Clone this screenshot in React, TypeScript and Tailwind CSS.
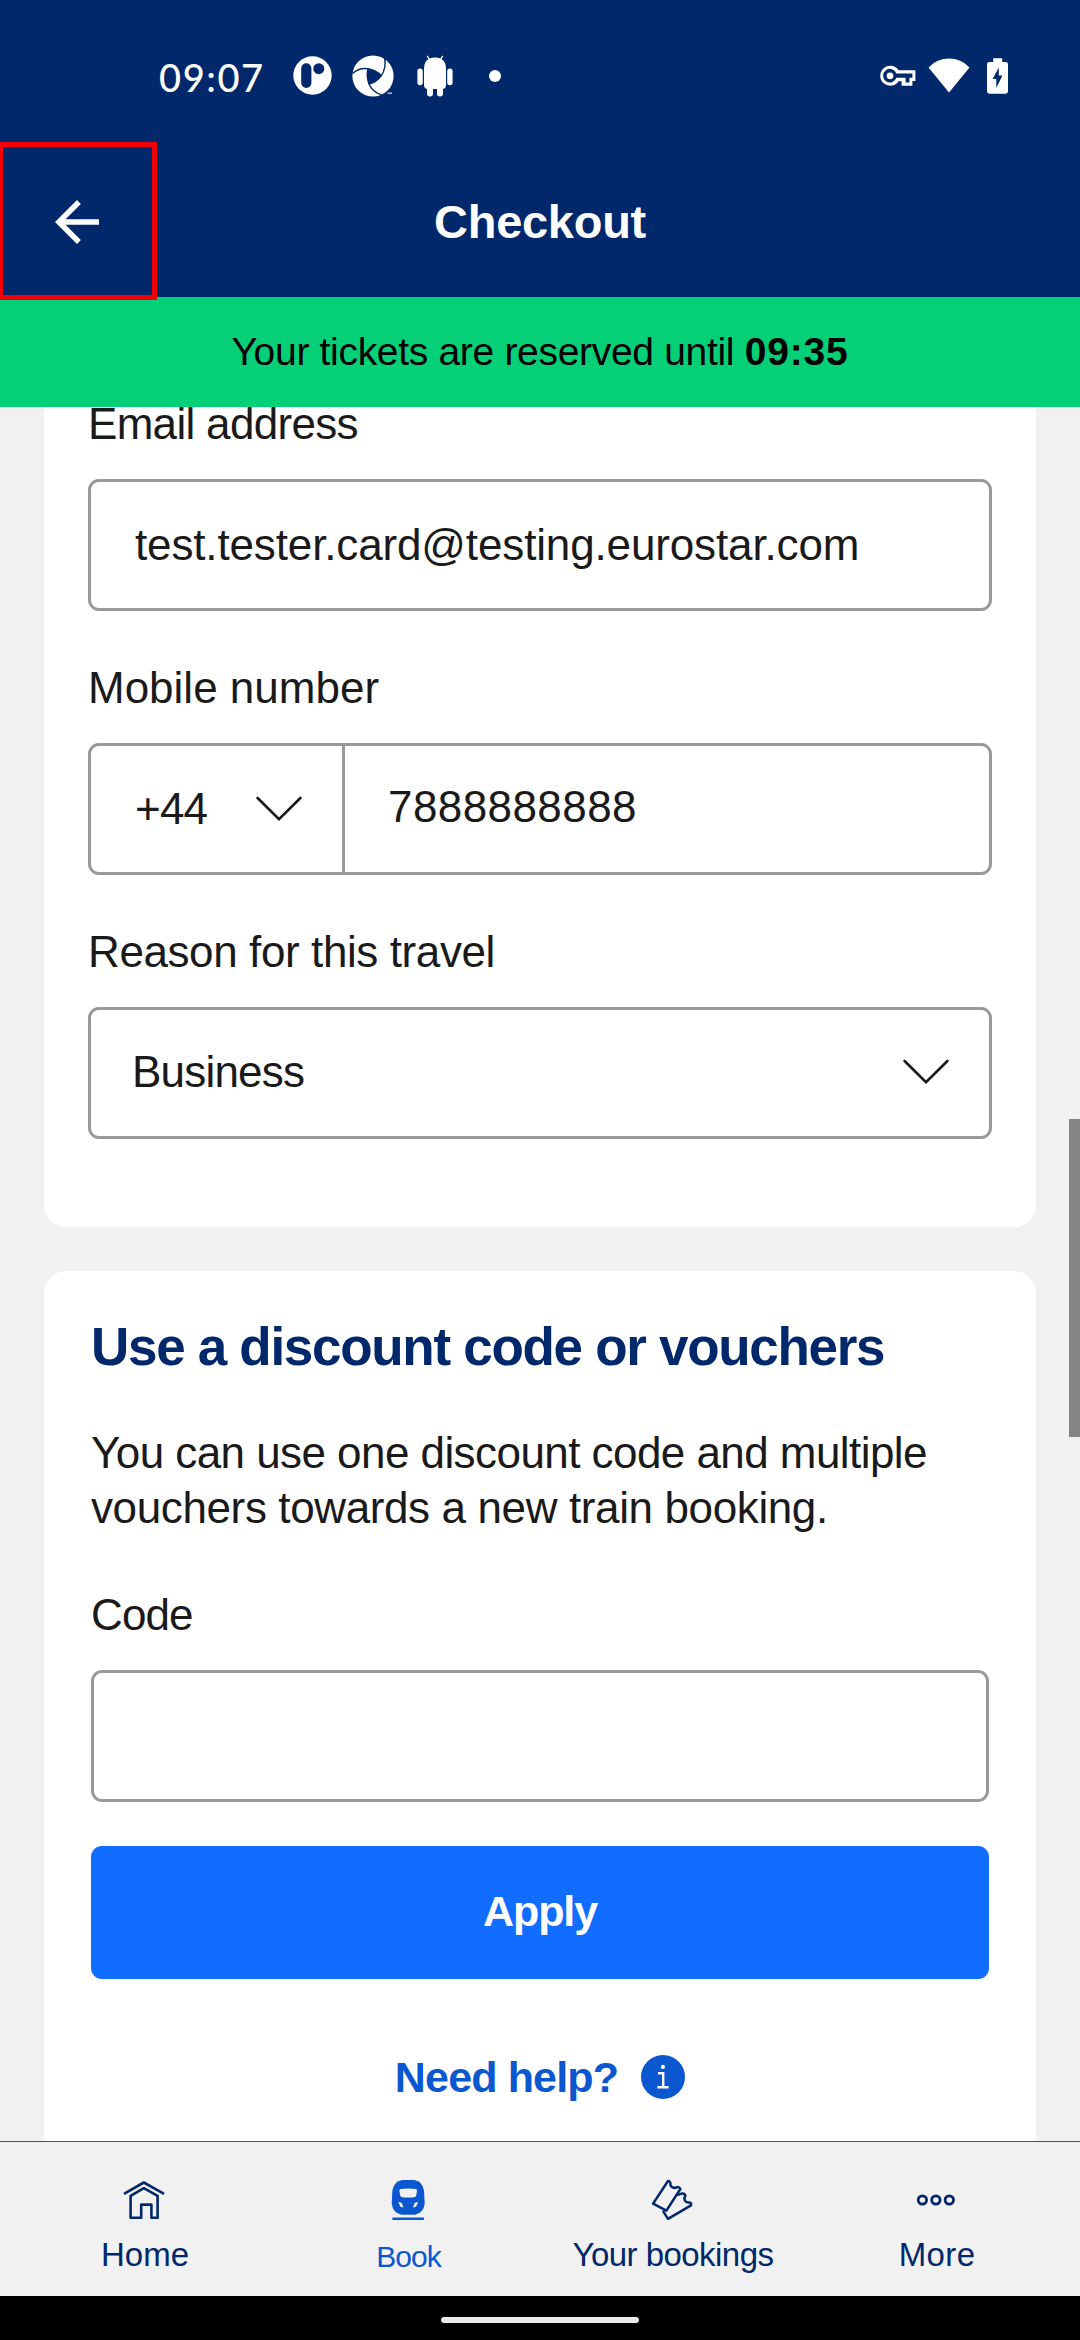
import type { ReactNode } from "react";

function CircleLogoIcon() {
  return (
    <svg width="39" height="39" viewBox="0 0 39 39" fill="#fff">
      <circle cx="19.5" cy="19.5" r="19.2" />
      <rect x="8.2" y="7.3" width="10.2" height="24.6" rx="5.1" fill="#00286a" />
      <circle cx="25.8" cy="12.7" r="5.5" fill="#00286a" />
    </svg>
  );
}

function ShutterIcon() {
  return (
    <svg width="42" height="42" viewBox="0 0 42 42" fill="none">
      <circle cx="21" cy="21" r="20.6" fill="#fff" />
      <path d="M16 13.7Q24 15 29.3 20.7Q24.5 27.5 17 29Q14 21 16 13.7Z" fill="#00286a" />
      <g stroke="#00286a" strokeWidth="1.4">
        <path d="M0.5 18.5Q7 12.5 16 13.7Q24 15 29.3 20.7" />
        <path d="M32.6 3Q34.5 13 29.3 20.7Q24.5 27.5 17 29" />
        <path d="M29.5 39.6Q20.5 37.5 17 29Q14 21 16 13.7" />
      </g>
      <path d="M31 40.5l6-4.2h5V42H31z" fill="#00286a" />
      <path d="M35.5 38.2h4.5" stroke="#c8d2e6" strokeWidth="1.3" />
    </svg>
  );
}

function AndroidIcon() {
  return (
    <svg width="36" height="42" viewBox="0 0 36 42" fill="#fff">
      <path d="M10.2 0.8l2.6 4M25.8 0.8l-2.6 4" stroke="#fff" strokeWidth="1.2" />
      <path d="M7 14Q7 2.4 18 2.4T29 14V30q0 3.5-3 4H10q-3-.5-3-4z" />
      <rect x="0.4" y="13.6" width="5.4" height="16.6" rx="2.6" />
      <rect x="30.2" y="13.6" width="5.4" height="16.6" rx="2.6" />
      <rect x="10" y="30" width="6" height="11.4" rx="2.4" />
      <rect x="20" y="30" width="6" height="11.4" rx="2.4" />
    </svg>
  );
}

function KeyIcon() {
  return (
    <svg width="36" height="22" viewBox="0 0 36 22">
      <path
        d="M18.6 5.2H35.4V16H32.4V20.8H21.6V16.2H18.6A10 10 0 1 1 18.6 5.2Z"
        fill="#fff"
      />
      <path
        d="M16.4 8.6H32.4V12.8H29.4V17.4H25.6V12.8H16.4A6.8 6.8 0 1 1 16.4 8.6Z"
        fill="#00286a"
      />
      <circle cx="10" cy="10.8" r="3.4" fill="#fff" />
    </svg>
  );
}

function WifiIcon() {
  return (
    <svg width="42" height="35" viewBox="0 0 42 35" fill="#fff">
      <path d="M21 34.6L0.5 9.4Q9 0.6 21 0.6T41.5 9.4Z" />
    </svg>
  );
}

function BatteryIcon() {
  return (
    <svg width="21" height="36" viewBox="0 0 21 36">
      <path
        d="M6.2 0.3h9v3.6h3.4Q21 3.9 21 6.3V33.3Q21 35.7 18.6 35.7H2.4Q0 35.7 0 33.3V6.3Q0 3.9 2.4 3.9H6.2Z"
        fill="#fff"
      />
      <path d="M11.8 9.6V17.6H15.4L9.3 30V21H5.6Z" fill="#00286a" />
    </svg>
  );
}

function BackIcon() {
  return (
    <svg width="66" height="66" viewBox="0 0 24 24" fill="#fff">
      <path d="M20 11H7.83l5.59-5.59L12 4l-8 8 8 8 1.41-1.41L7.83 13H20v-2z" />
    </svg>
  );
}

function Chevron() {
  return (
    <svg width="46" height="26" viewBox="0 0 46 26" fill="none" stroke="#1a1a1a" strokeWidth="2.6">
      <path d="M1.6 2L23 23.2L44.4 2" strokeLinecap="round" />
    </svg>
  );
}

function InfoIcon() {
  return (
    <svg width="44" height="44" viewBox="0 0 44 44">
      <circle cx="22" cy="22" r="22" fill="#0b57d0" />
      <circle cx="21.9" cy="11.9" r="2.1" fill="#fff" />
      <path d="M17 18.3H22.2V31.6M16.4 32.2H27.6" fill="none" stroke="#fff" strokeWidth="2.4" />
    </svg>
  );
}

function HomeIcon() {
  return (
    <svg width="44" height="44" viewBox="0 0 44 44" fill="none" stroke="#00286a" strokeWidth="2.6" strokeLinejoin="round" strokeLinecap="round">
      <path d="M2.9 15.4L21.8 4.5L41.2 15.4" />
      <path d="M8.6 17.8L21.8 10.2L35.6 17.8V39.8H29.4V26.6H19.2V39.8H8.6Z" />
    </svg>
  );
}

function TrainIcon() {
  return (
    <svg width="44" height="44" viewBox="0 0 44 44" fill="#0b57d0">
      <path d="M16 2H28.4Q36.6 3.4 38 12.5L38.7 25.5Q37.6 35 29 36.8H15.4Q6.8 35 5.7 25.5L6.4 12.5Q7.8 3.4 16 2Z" />
      <path d="M14.6 11Q22.2 9.8 29.8 11Q31.2 11.4 31 13L30.2 17.4Q29.8 19 28.2 19.2Q22.2 20 16.2 19.2Q14.6 19 14.2 17.4L13.4 13Q13.2 11.4 14.6 11Z" fill="#f1f1f1" />
      <path d="M12.2 24L15.6 24.7L17.5 29.5L14.4 28.8ZM32.2 24L28.8 24.7L26.9 29.5L30 28.8Z" fill="#f1f1f1" />
      <path d="M7.4 40.7H37" stroke="#0b57d0" strokeWidth="2.4" strokeLinecap="round" />
    </svg>
  );
}

function TicketsIcon() {
  return (
    <svg width="44" height="44" viewBox="0 0 44 44" fill="none" stroke="#00286a" strokeWidth="2.5" strokeLinejoin="round" strokeLinecap="round">
      <path d="M18 3L3.1 25.6L16.4 32.6L30.4 11Q29 8.6 27 9.2Q24.2 10.8 21.6 8.8Q20 7.4 20.4 5Q19.8 3 18 3Z" />
      <path d="M13.4 33.6L18 40.8L41 27.4Q41.6 25.2 39.6 24.4Q36.4 25.2 34.8 22.4Q33.8 20 35.4 17.8Q34.6 15 31.6 15.6L28.4 16.6" />
    </svg>
  );
}

function MoreIcon() {
  return (
    <svg width="44" height="44" viewBox="0 0 44 44" fill="none" stroke="#00286a" strokeWidth="2.8">
      <circle cx="8.4" cy="22" r="4.2" />
      <circle cx="21.9" cy="22" r="4.2" />
      <circle cx="35.3" cy="22" r="4.2" />
    </svg>
  );
}

function Label({ className, children }: { className: string; children: ReactNode }) {
  return <div className={`h-[34px] text-[44px] leading-[34px] whitespace-nowrap ${className}`}>{children}</div>;
}

function Tab({ icon, className, children }: { icon: ReactNode; className: string; children: ReactNode }) {
  return (
    <div className="flex flex-col items-center pt-[36px]">
      {icon}
      <div className={`h-[40px] leading-[40px] whitespace-nowrap ${className}`}>{children}</div>
    </div>
  );
}

export default function App() {
  return (
    <div className="flex h-[2340px] w-[1080px] flex-col overflow-hidden bg-[#f1f1f1] font-['Liberation_Sans',Arial,sans-serif] text-[#1a1a1a]">
      <header className="flex h-[297px] shrink-0 flex-col bg-[#00286a] text-white">
        <div className="flex h-[142px] shrink-0 items-center pt-[9px] pr-[72px] pl-[159px]">
          <span className="w-[134px] pt-[2px] font-['Lato',sans-serif] text-[38px] leading-[40px] font-medium tracking-[1.6px]">
            09:07
          </span>
          <CircleLogoIcon />
          <span className="ml-[20px]">
            <ShutterIcon />
          </span>
          <span className="ml-[23px]">
            <AndroidIcon />
          </span>
          <span className="ml-[36px] size-[12px] rounded-full bg-white" />
          <div className="ml-auto flex items-center">
            <span className="mt-[1px]">
              <KeyIcon />
            </span>
            <span className="ml-[12px]">
              <WifiIcon />
            </span>
            <span className="ml-[17px]">
              <BatteryIcon />
            </span>
          </div>
        </div>
        <div className="flex h-[155px] items-center">
          <div className="relative flex h-[155px] w-[157px] items-center pt-[4px] pl-[44px]">
            <BackIcon />
            <div className="absolute top-0 -left-[2px] h-[158px] w-[159px] border-[5px] border-[#f20008]" />
          </div>
          <h1 className="flex-1 pt-[4px] pr-[157px] text-center text-[47px] leading-[56px] font-bold tracking-[-0.28px]">
            Checkout
          </h1>
        </div>
      </header>

      <div className="flex h-[110px] shrink-0 items-center justify-center bg-[#05cf77] text-[39px] leading-[44px] whitespace-pre text-[#000]">
        <span className="tracking-[-0.31px]">Your tickets are reserved until </span>
        <span className="font-bold tracking-[0.8px]">09:35</span>
      </div>

      <main className="relative h-[1734px] shrink-0 overflow-hidden px-[44px]">
        <section className="h-[820px] rounded-b-[22px] bg-white px-[44px]">
          <Label className="tracking-[-0.69px]">Email address</Label>
          <div className="mt-[38px] flex h-[132px] w-[904px] items-center rounded-[11px] border-[3px] border-[#999] pb-[1px] pl-[44px] text-[44px] leading-[50px] tracking-[-0.14px]">
            test.tester.card@testing.eurostar.com
          </div>
          <Label className="mt-[60px]">Mobile number</Label>
          <div className="mt-[38px] flex h-[132px] w-[904px] items-stretch rounded-[11px] border-[3px] border-[#999] text-[44px] leading-[50px]">
            <div className="flex w-[254px] items-center border-r-[3px] border-[#999] pl-[44px]">
              <span className="w-[121px] tracking-[-0.8px]">+44</span>
              <Chevron />
            </div>
            <div className="flex items-center pb-[4px] pl-[43px] tracking-[0.42px]">7888888888</div>
          </div>
          <Label className="mt-[60px] tracking-[-0.4px]">Reason for this travel</Label>
          <div className="mt-[38px] flex h-[132px] w-[904px] items-center justify-between rounded-[11px] border-[3px] border-[#999] pr-[40px] pb-[2px] pl-[41px] text-[44px] leading-[50px]">
            <span className="tracking-[-0.79px]">Business</span>
            <Chevron />
          </div>
        </section>

        <section className="mt-[44px] flex flex-col rounded-t-[22px] bg-white px-[47px] pt-[46px] pb-[42px]">
          <h2 className="h-[60px] text-[53px] leading-[60px] font-bold tracking-[-1.3px] whitespace-nowrap text-[#00286a]">
            Use a discount code or vouchers
          </h2>
          <p className="mt-[48px] text-[44px] leading-[55px] whitespace-nowrap">
            <span className="tracking-[-0.56px]">You can use one discount code and multiple</span>
            <br />
            <span className="tracking-[-0.38px]">vouchers towards a new train booking.</span>
          </p>
          <Label className="mt-[63px] tracking-[-0.9px]">Code</Label>
          <div className="mt-[38px] h-[132px] rounded-[11px] border-[3px] border-[#999]" />
          <button className="mt-[44px] flex h-[133px] items-center justify-center rounded-[11px] bg-[#116dff] pb-[4px] text-[43px] leading-[50px] font-bold tracking-[-1.1px] text-white">
            Apply
          </button>
          <div className="mt-[76px] flex h-[44px] items-center justify-center gap-[23px] text-[#0b57d0]">
            <span className="text-[43px] leading-[44px] font-bold tracking-[-0.85px]">Need help?</span>
            <InfoIcon />
          </div>
        </section>

        <div className="absolute top-[712px] right-0 h-[318px] w-[11px] bg-[#858585]" />
      </main>

      <nav className="grid h-[155px] shrink-0 grid-cols-4 border-t border-[#1b5e9b] bg-[#f1f1f1] px-[12px] text-[33px] text-[#00286a]">
        <Tab icon={<HomeIcon />} className="mt-[13px] pl-[2px]">
          Home
        </Tab>
        <Tab icon={<TrainIcon />} className="mt-[15px] pl-[1px] text-[30px] tracking-[-0.96px] text-[#0b57d0]">
          Book
        </Tab>
        <Tab icon={<TicketsIcon />} className="mt-[13px] pl-[2px] tracking-[-0.54px]">
          Your bookings
        </Tab>
        <Tab icon={<MoreIcon />} className="mt-[13px] pl-[2px] tracking-[0.39px]">
          More
        </Tab>
      </nav>

      <div className="flex h-[44px] shrink-0 items-center justify-center bg-black">
        <div className="mt-[4px] h-[6px] w-[198px] rounded-full bg-[#ebe8ec]" />
      </div>
    </div>
  );
}
